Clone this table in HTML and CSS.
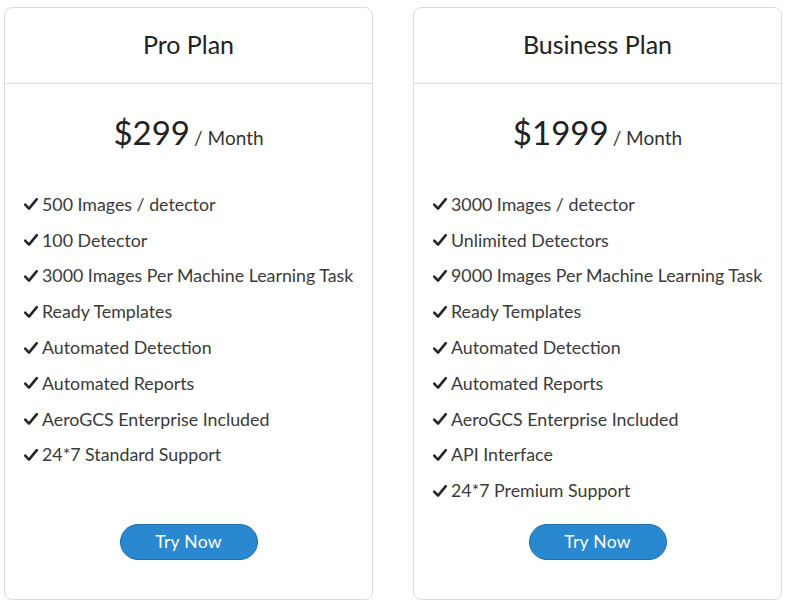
FILE: index.html
```html
<!DOCTYPE html>
<html lang="en">
<head>
  <meta charset="UTF-8">
  <meta name="viewport" content="width=device-width, initial-scale=1.0">
  <title>Pricing Plans</title>
  <link rel="stylesheet" href="styles.css">
</head>
<body>
  <section class="pricing">
    <!-- Pro Plan -->
    <div class="plan">
      <div class="plan-header">
        <h3>Pro Plan</h3>
      </div>
      <div class="plan-body">
        <p class="price"><span class="amount">$299</span> <span class="period">/ Month</span></p>
        <ul class="features">
          <li>500 Images / detector</li>
          <li>100 Detector</li>
          <li>3000 Images Per Machine Learning Task</li>
          <li>Ready Templates</li>
          <li>Automated Detection</li>
          <li>Automated Reports</li>
          <li>AeroGCS Enterprise Included</li>
          <li>24*7 Standard Support</li>
        </ul>
        <a href="#" class="btn">Try Now</a>
      </div>
    </div>

    <!-- Business Plan -->
    <div class="plan">
      <div class="plan-header">
        <h3>Business Plan</h3>
      </div>
      <div class="plan-body">
        <p class="price"><span class="amount">$1999</span> <span class="period">/ Month</span></p>
        <ul class="features">
          <li>3000 Images / detector</li>
          <li>Unlimited Detectors</li>
          <li>9000 Images Per Machine Learning Task</li>
          <li>Ready Templates</li>
          <li>Automated Detection</li>
          <li>Automated Reports</li>
          <li>AeroGCS Enterprise Included</li>
          <li>API Interface</li>
          <li>24*7 Premium Support</li>
        </ul>
        <a href="#" class="btn">Try Now</a>
      </div>
    </div>
  </section>
</body>
</html>
```

FILE: styles.css
```css
/* General Styles */
* {
  margin: 0;
  padding: 0;
  box-sizing: border-box;
}

body {
  font-family: Lato, "Open Sans", sans-serif;
  background-color: #fff;
  color: #333;
  padding: 7px 8px 6px 4px;
}

/* Pricing Cards */
.pricing {
  display: grid;
  grid-template-columns: 369px 369px;
  gap: 40px;
}

.plan {
  display: flex;
  flex-direction: column;
  height: 593px;
  border: 1px solid #dcdcdc;
  border-radius: 8px;
  background-color: #fff;
}

.plan-header {
  height: 76px;
  padding-bottom: 3px;
  border-bottom: 1px solid #dcdcdc;
  display: flex;
  align-items: center;
  justify-content: center;
}

.plan-header h3 {
  font-size: 25px;
  font-weight: 400;
  color: #222;
}

.plan-body {
  flex: 1;
  display: flex;
  flex-direction: column;
  padding: 28px 19px 39px;
}

.price {
  text-align: center;
  color: #222;
  margin-bottom: 34px;
}

.price .amount {
  font-size: 33px;
}

.price .period {
  font-size: 19px;
  color: #333;
}

/* Feature list */
.features {
  list-style: none;
}

.features li {
  display: flex;
  align-items: center;
  height: 35.8px;
  font-size: 17.8px;
  white-space: nowrap;
  color: #3a3a3a;
}

.features li::before {
  content: "";
  flex: none;
  width: 14px;
  height: 12px;
  margin: 1px 4px 0 0;
  background: url("data:image/svg+xml,%3Csvg xmlns='http://www.w3.org/2000/svg' viewBox='0 0 14 12'%3E%3Cpath d='M1.2 6.6 L5 10.6 L12.8 1.2' fill='none' stroke='%23262626' stroke-width='2.6' stroke-linecap='round' stroke-linejoin='round'/%3E%3C/svg%3E") no-repeat center / contain;
}

/* Button */
.btn {
  margin: auto auto 0;
  width: 138px;
  height: 36px;
  line-height: 34px;
  text-align: center;
  background-color: #2a88d0;
  border: 1px solid #1d6fae;
  border-radius: 18px;
  color: #fff;
  font-size: 17.5px;
  text-decoration: none;
  letter-spacing: 0.3px;
}
```
